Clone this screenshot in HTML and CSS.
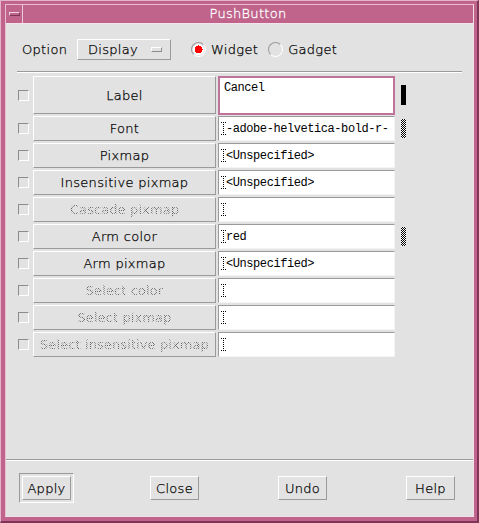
FILE: index.html
```html
<!DOCTYPE html>
<html lang="en">
<head>
    <meta charset="UTF-8">
    <title>PushButton</title>
    <link rel="stylesheet" href="styles.css">
</head>
<body>
    <div class="window">
        <div class="inner">
            <!-- title bar -->
            <div class="titlebar">
                <div class="menu-btn"><span></span></div>
                <div class="title">PushButton</div>
            </div>

            <div class="content">
                <div class="option-row">
                    <span class="opt-label">Option</span>
                    <div class="option-menu">Display<span class="indicator"></span></div>
                    <div class="radio on"><span class="dot"></span>Widget</div>
                    <div class="radio"><span class="dot"></span>Gadget</div>
                </div>
                <div class="sep inset"></div>

                <!-- resource rows -->
                <div class="rows">
                    <div class="row tall">
                        <span class="check"></span>
                        <div class="res">Label</div>
                        <div class="field focus multi">Cancel</div>
                        <span class="mark solid"></span>
                    </div>
                    <div class="row">
                        <span class="check"></span>
                        <div class="res">Font</div>
                        <div class="field"><svg class="caret" width="5" height="13"><path d="M0 .5h5M0 12.5h5M2.5 0v13" stroke="#000" stroke-dasharray="1 1"/></svg>-adobe-helvetica-bold-r-</div>
                        <span class="mark stipple"></span>
                    </div>
                    <div class="row">
                        <span class="check"></span>
                        <div class="res">Pixmap</div>
                        <div class="field"><svg class="caret" width="5" height="13"><path d="M0 .5h5M0 12.5h5M2.5 0v13" stroke="#000" stroke-dasharray="1 1"/></svg>&lt;Unspecified&gt;</div>
                        <span class="mark"></span>
                    </div>
                    <div class="row">
                        <span class="check"></span>
                        <div class="res">Insensitive pixmap</div>
                        <div class="field"><svg class="caret" width="5" height="13"><path d="M0 .5h5M0 12.5h5M2.5 0v13" stroke="#000" stroke-dasharray="1 1"/></svg>&lt;Unspecified&gt;</div>
                        <span class="mark"></span>
                    </div>
                    <div class="row">
                        <span class="check"></span>
                        <div class="res disabled">Cascade pixmap</div>
                        <div class="field"><svg class="caret" width="5" height="13"><path d="M0 .5h5M0 12.5h5M2.5 0v13" stroke="#000" stroke-dasharray="1 1"/></svg></div>
                        <span class="mark"></span>
                    </div>
                    <div class="row">
                        <span class="check"></span>
                        <div class="res">Arm color</div>
                        <div class="field"><svg class="caret" width="5" height="13"><path d="M0 .5h5M0 12.5h5M2.5 0v13" stroke="#000" stroke-dasharray="1 1"/></svg>red</div>
                        <span class="mark stipple"></span>
                    </div>
                    <div class="row">
                        <span class="check"></span>
                        <div class="res">Arm pixmap</div>
                        <div class="field"><svg class="caret" width="5" height="13"><path d="M0 .5h5M0 12.5h5M2.5 0v13" stroke="#000" stroke-dasharray="1 1"/></svg>&lt;Unspecified&gt;</div>
                        <span class="mark"></span>
                    </div>
                    <div class="row">
                        <span class="check"></span>
                        <div class="res disabled">Select color</div>
                        <div class="field"><svg class="caret" width="5" height="13"><path d="M0 .5h5M0 12.5h5M2.5 0v13" stroke="#000" stroke-dasharray="1 1"/></svg></div>
                        <span class="mark"></span>
                    </div>
                    <div class="row">
                        <span class="check"></span>
                        <div class="res disabled">Select pixmap</div>
                        <div class="field"><svg class="caret" width="5" height="13"><path d="M0 .5h5M0 12.5h5M2.5 0v13" stroke="#000" stroke-dasharray="1 1"/></svg></div>
                        <span class="mark"></span>
                    </div>
                    <div class="row">
                        <span class="check"></span>
                        <div class="res disabled">Select insensitive pixmap</div>
                        <div class="field"><svg class="caret" width="5" height="13"><path d="M0 .5h5M0 12.5h5M2.5 0v13" stroke="#000" stroke-dasharray="1 1"/></svg></div>
                        <span class="mark"></span>
                    </div>
                </div>

                <!-- action area -->
                <div class="footer">
                    <div class="sep"></div>
                    <div class="actions">
                        <div class="slot default"><div class="btn">Apply</div></div>
                        <div class="slot"><div class="btn">Close</div></div>
                        <div class="slot"><div class="btn">Undo</div></div>
                        <div class="slot"><div class="btn">Help</div></div>
                    </div>
                </div>
            </div>
        </div>
    </div>
</body>
</html>
```

FILE: styles.css
```css
* {
    box-sizing: border-box;
}

body {
    margin: 0;
    font-family: "DejaVu Sans", sans-serif;
    font-size: 13px;
    font-weight: 300;
    letter-spacing: 0.3px;
    color: #000;
    -webkit-text-stroke: 0.25px #000;
}

.window {
    width: 479px;
    height: 523px;
    background: #c0648c;
    border-left: 1px solid #e6b4ca;
    border-top: 1px solid #e6b4ca;
    border-right: 2px solid #7e3558;
    border-bottom: 2px solid #7e3558;
    padding: 3px 3px 4px 4px;
}

.inner {
    height: 100%;
    display: flex;
    flex-direction: column;
    border: 1px solid;
    border-color: #e9bdd0 #f2e0e8 #f2e0e8 #e9bdd0;
}

.titlebar {
    height: 19px;
    display: flex;
    background: #c0648c;
    border-bottom: 1px solid #f4e4ec;
}

.menu-btn {
    width: 17px;
    border-right: 1px solid #ecc9d8;
    display: flex;
    align-items: center;
    justify-content: center;
}

.menu-btn span {
    width: 11px;
    height: 4px;
    border: 1px solid;
    border-color: #f0d4e0 #7e3558 #7e3558 #f0d4e0;
}

.title {
    flex: 1;
    text-align: center;
    color: #fff;
    line-height: 18px;
    -webkit-text-stroke: 0.3px #fff;
}

.content {
    flex: 1;
    display: flex;
    flex-direction: column;
    background: #e2e2e2;
}

.option-row {
    display: flex;
    align-items: center;
    height: 21px;
    margin-top: 15px;
    padding-left: 16px;
}

.opt-label {
    width: 55px;
}

.option-menu {
    width: 94px;
    height: 21px;
    display: flex;
    align-items: center;
    justify-content: space-between;
    padding: 0 8px 0 10px;
    border: 1px solid;
    border-color: #fff #9a9a9a #9a9a9a #fff;
}

.indicator {
    width: 11px;
    height: 5px;
    border: 1px solid;
    border-color: #fff #8c8c8c #8c8c8c #fff;
}

.radio {
    display: flex;
    align-items: center;
    margin-left: 20px;
}

.radio + .radio {
    margin-left: 10px;
}

.radio .dot {
    width: 15px;
    height: 15px;
    border-radius: 50%;
    border: 1px solid;
    border-color: #9a9a9a #fff #fff #9a9a9a;
    margin-right: 5px;
}

.radio.on .dot {
    background: radial-gradient(circle, #f00 0 4px, #fff 4px 5.5px, transparent 5.5px);
}

.sep {
    height: 2px;
    border-top: 1px solid #9a9a9a;
    border-bottom: 1px solid #fff;
}

.sep.inset {
    margin: 11px 11px 0 11px;
}

.rows {
    display: flex;
    flex-direction: column;
    gap: 2px;
    margin-top: 3px;
    padding-left: 12px;
}

.row {
    display: flex;
    align-items: center;
    height: 25px;
}

.row.tall {
    height: 38px;
}

.check {
    width: 11px;
    height: 11px;
    border: 1px solid;
    border-color: #8c8c8c #fff #fff #8c8c8c;
    margin-right: 4px;
}

.res {
    width: 183px;
    height: 100%;
    display: flex;
    align-items: center;
    justify-content: center;
    white-space: nowrap;
    border: 1px solid;
    border-color: #fff #9a9a9a #9a9a9a #fff;
}

.res.disabled {
    color: transparent;
    letter-spacing: 0.1px;
    font-weight: 400;
    -webkit-text-stroke: 0;
    background-image: repeating-conic-gradient(#666 0 25%, transparent 0 50%);
    background-size: 2px 2px;
    -webkit-background-clip: text;
    background-clip: text;
}

.field {
    width: 177px;
    height: 100%;
    margin-left: 2px;
    background: #fff;
    display: flex;
    align-items: center;
    padding-left: 2px;
    white-space: nowrap;
    overflow: hidden;
    font-family: "Liberation Mono", monospace;
    font-size: 12px;
    font-weight: 400;
    -webkit-text-stroke: 0;
    letter-spacing: -0.43px;
    border: 1px solid;
    border-color: #9a9a9a #f4f4f4 #f4f4f4 #9a9a9a;
}

.field.multi {
    align-items: flex-start;
    padding: 3px 0 0 4px;
}

.field.focus {
    border: 2px solid #c0739a;
    height: 39px;
}

.caret {
    flex-shrink: 0;
}

.mark {
    width: 5px;
    margin-left: 6px;
    align-self: center;
}

.mark.solid {
    height: 20px;
    background: #000;
}

.mark.stipple {
    height: 19px;
    background-image: repeating-conic-gradient(#000 0 25%, #fff 0 50%);
    background-size: 2px 2px;
}

.footer {
    margin-top: auto;
}

.actions {
    display: grid;
    grid-template-columns: repeat(4, 55px);
    column-gap: 73px;
    padding: 12px 0 13px 13px;
}

.slot {
    height: 30px;
    padding: 3px;
}

.slot.default {
    border: 1px solid;
    border-color: #9a9a9a #fff #fff #9a9a9a;
    padding: 2px;
}

.btn {
    height: 24px;
    display: flex;
    align-items: center;
    justify-content: center;
    border: 1px solid;
    border-color: #fff #9a9a9a #9a9a9a #fff;
}
```
